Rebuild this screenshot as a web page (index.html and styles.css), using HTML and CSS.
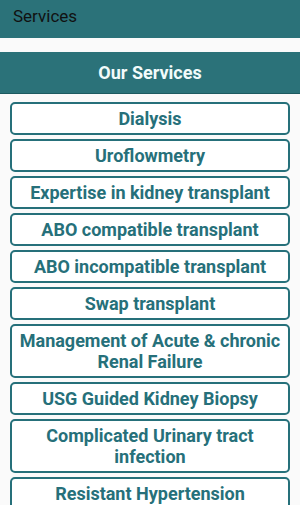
FILE: index.html
```html
<!DOCTYPE html>
<html lang="en">
<head>
    <meta charset="UTF-8">
    <meta name="viewport" content="width=device-width, initial-scale=1.0">
    <title>Services</title>
    <link rel="stylesheet" href="styles.css">
</head>
<body>

    <div class="app-bar">Services</div>

    <div class="section-title">Our Services</div>

    <div class="service-list">
        <button class="service">Dialysis</button>
        <button class="service">Uroflowmetry</button>
        <button class="service">Expertise in kidney transplant</button>
        <button class="service">ABO compatible transplant</button>
        <button class="service">ABO incompatible transplant</button>
        <button class="service">Swap transplant</button>
        <button class="service">Management of Acute &amp; chronic Renal Failure</button>
        <button class="service">USG Guided Kidney Biopsy</button>
        <button class="service">Complicated Urinary tract infection</button>
        <button class="service">Resistant Hypertension</button>
    </div>

</body>
</html>
```

FILE: styles.css
```css
html, body {
    height: 100%;
    overflow: hidden;
}
body {
    font-family: Roboto, "Noto Sans", sans-serif;
    background-color: #fafafa;
    margin: 0;
}
.app-bar {
    height: 38px;
    background-color: #2b7279;
    color: #111;
    font-size: 17px;
    line-height: 32px;
    padding-left: 13px;
}
.section-title {
    margin-top: 14px;
    height: 41px;
    line-height: 41px;
    background-color: #2b7279;
    border-bottom: 1px solid #1d5a60;
    color: #f2fbfb;
    font-size: 18px;
    font-weight: bold;
    text-align: center;
}
.service-list {
    display: flex;
    flex-direction: column;
    gap: 4px;
    padding: 8px 10px 0;
}
.service {
    width: 100%;
    background: #fff;
    border: 2px solid #26707a;
    border-radius: 5px;
    padding: 4px 2px;
    font-family: inherit;
    font-size: 18px;
    font-weight: bold;
    line-height: 21px;
    color: #26707a;
    text-align: center;
}
```
